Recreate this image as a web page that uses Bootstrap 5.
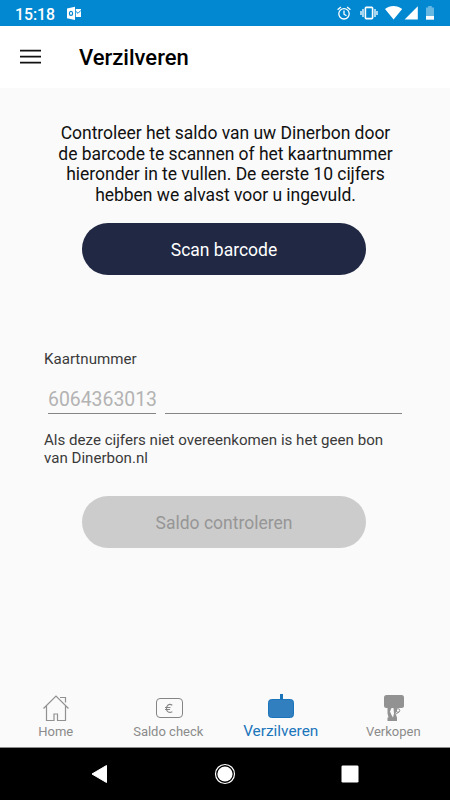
<!DOCTYPE html>
<html lang="nl">
<head>
<meta charset="utf-8">
<meta name="viewport" content="width=device-width, initial-scale=1">
<title>Verzilveren</title>
<link href="https://cdn.jsdelivr.net/npm/bootstrap@5.3.0/dist/css/bootstrap.min.css" rel="stylesheet">
<style>
  body { font-family: Roboto, "Liberation Sans", sans-serif; background: #fafafa; color: #111; }
  svg { display: block; flex: none; }
  .status-bar { height: 26px; background: #0288d1; padding: 2px 0 0 15px; font-size: 15.8px; line-height: 24px; }
  .clock { font-weight: 500; padding-top: 1px; }
  .app-bar { height: 62px; padding: 0 20px; gap: 38px; }
  .app-title { font-size: 22px; line-height: 25px; font-weight: 500; color: #000; padding-top: 1px; }
  .content { padding: 35px 46px 0 44px; }
  .intro { font-size: 17.5px; line-height: 20.5px; letter-spacing: -.03px; padding-left: 3px; }
  .pill { width: 284px; height: 52px; font-size: 17.5px; --bs-btn-padding-y: 0; --bs-btn-border-width: 0; padding-top: 2px; }
  .pill-scan { --bs-btn-bg: #202843; --bs-btn-color: #fff; --bs-btn-hover-bg: #2b3558; --bs-btn-hover-color: #fff; margin-top: 18px; }
  .pill-check { --bs-btn-disabled-bg: #ccc; --bs-btn-disabled-color: #969696; --bs-btn-disabled-opacity: 1; margin-top: 29px; }
  .field-label { font-size: 15.1px; line-height: 18px; margin-top: 75px; color: #3a3a3a; }
  .fields { margin: 18px 2px 0 4px; gap: 9px; }
  .line-input, .line-input:disabled { min-width: 0; height: 28px; background: transparent; border-bottom: 1px solid #858585; font-size: 19.4px; color: #b3b3b3; }
  .line-input.prefix { width: 108px; flex: none; }
  .hint { font-size: 15.1px; line-height: 18px; margin-top: 17px; color: #3a3a3a; }
  .tabs { height: 58px; color: #8b8b8b; font-size: 13px; line-height: 16px; }
  .tab { flex: 1 1 0; gap: 2px; color: inherit; }
  .tab span { margin-left: -1px; }
  .tab.current { color: #1b75bb; font-size: 15.4px; gap: 1px; }
  .system-bar { height: 53px; background: #000; padding: 0 91px; border-top: 1px solid #8c8c8c; }
</style>
<script src="https://cdn.jsdelivr.net/npm/bootstrap@5.3.0/dist/js/bootstrap.bundle.min.js"></script>
</head>
<body class="vh-100 overflow-hidden d-flex flex-column">
  <div class="status-bar d-flex align-items-center text-white flex-shrink-0">
    <span class="clock">15:18</span>
    <svg class="ms-auto" width="384" height="24" viewBox="66 2 384 24">
      <path fill="#fff" d="M67 8.500l8-1.700v13.200l-8-1.700z"/>
      <path fill="#fff" d="M75.800 9h5.200v8h-5.200z"/>
      <ellipse cx="71" cy="13.400" rx="1.600" ry="2" fill="none" stroke="#0288d1" stroke-width="1.200"/>
      <path d="M76 11.500l2 1.800 3-3" fill="none" stroke="#0288d1"/>
      <g fill="none" stroke="#fff" stroke-width="1.300">
        <circle cx="344" cy="13.800" r="5.200"/>
        <path d="M344 10.500v3.700l2.500 1.500M337.600 9.700l3.300-2.800M350.400 9.700l-3.300-2.800"/>
        <rect x="365.400" y="7.400" width="7.200" height="11.200" rx=".8" stroke-width="1.600"/>
        <path d="M363 9v8M375 9v8M361 11v4M377 11v4" stroke-width="1.300"/>
      </g>
      <path fill="#fff" d="M385 9c5-4 12-4 17.200 0L393.600 19.500zM417.800 6.300V19.500H404.600z"/>
      <path fill="#fff" fill-opacity=".4" d="M426 7.500h2.200V6h3.600v1.500h2.200V16h-8z"/>
      <path fill="#fff" d="M426 16h8v3.700h-8z"/>
    </svg>
  </div>
  <header class="app-bar bg-white d-flex align-items-center flex-shrink-0">
    <svg width="21" height="16" viewBox="0 0 21 16"><path d="M0 1.700h21M0 7.700h21M0 13.700h21" stroke="#111" stroke-width="1.800"/></svg>
    <h1 class="app-title mb-0">Verzilveren</h1>
  </header>
  <main class="content flex-grow-1 d-flex flex-column">
    <p class="intro text-center text-nowrap mb-0">Controleer het saldo van uw Dinerbon door<br>de barcode te scannen of het kaartnummer<br>hieronder in te vullen. De eerste 10 cijfers<br>hebben we alvast voor u ingevuld.</p>
    <button class="pill pill-scan btn rounded-pill align-self-center" type="button">Scan barcode</button>
    <label class="field-label" for="card">Kaartnummer</label>
    <div class="fields d-flex">
      <input class="line-input prefix border-top-0 border-start-0 border-end-0 p-0" value="6064363013" disabled>
      <input class="line-input flex-grow-1 border-top-0 border-start-0 border-end-0 p-0" id="card">
    </div>
    <p class="hint text-nowrap mb-0">Als deze cijfers niet overeenkomen is het geen bon<br>van Dinerbon.nl</p>
    <button class="pill pill-check btn rounded-pill align-self-center" type="button" disabled>Saldo controleren</button>
  </main>
  <nav class="tabs d-flex flex-shrink-0">
    <a class="tab d-flex flex-column align-items-center text-decoration-none" href="#">
      <svg width="28" height="33" viewBox="42 689 28 33" fill="none" stroke="#919191" stroke-width="1.200"><path d="M43.500 708.500L56 696l12.500 12.500M46.500 706v14.500H54V714h3.500v6.500h8V706M60 697.500h5.500v5"/></svg>
      <span>Home</span>
    </a>
    <a class="tab d-flex flex-column align-items-center text-decoration-none" href="#">
      <svg width="28" height="33" viewBox="154 689 28 33" fill="none" stroke="#858585"><rect x="155.500" y="698.500" width="26" height="19" rx="3.500"/><path d="M171.300 705.200c-3.500-2-5.800.3-5.800 3.300s2.300 5 5.800 3.200M164 707.500h5.500M164 709.500h5" stroke-width="1.100"/></svg>
      <span>Saldo check</span>
    </a>
    <a class="tab current d-flex flex-column align-items-center text-decoration-none" href="#" aria-current="page">
      <svg width="28" height="33" viewBox="267 689 28 33"><path d="M281.500 694v6" stroke="#1b75bb" stroke-width="3"/><rect x="268.500" y="699.500" width="25" height="18" rx="3" fill="#327fbf" stroke="#1b75bb"/></svg>
      <span>Verzilveren</span>
    </a>
    <a class="tab d-flex flex-column align-items-center text-decoration-none" href="#">
      <svg width="28" height="33" viewBox="379.500 689 28 33"><rect x="383.500" y="695" width="20" height="13" rx="2.500" fill="#929292"/><path d="M387 708h4l-1.500 3.500 1.500 3.500 1.500 2.500h-4.500l-1-4zM393 708h3.500v2.500l-1.500 3 1.500 4H392.500l1-4zM387 717.500h9.500v3.500H387z" fill="#929292"/><circle cx="397.500" cy="710.500" r="1.800" fill="none" stroke="#929292"/><path d="M395.500 714l3-2" stroke="#929292"/></svg>
      <span>Verkopen</span>
    </a>
  </nav>
  <footer class="system-bar d-flex align-items-center justify-content-between flex-shrink-0">
    <svg width="17" height="20" viewBox="0 0 17 20"><path d="M1 10L15.500 1.500v17z" fill="#fff" stroke="#fff" stroke-linejoin="round"/></svg>
    <svg width="22" height="22" viewBox="0 0 22 22"><circle cx="11" cy="11" r="7.600" fill="#fff"/><circle cx="11" cy="11" r="9.500" fill="none" stroke="#fff" stroke-width="1.200"/></svg>
    <svg width="18" height="18" viewBox="0 0 18 18"><rect x=".5" y=".5" width="17" height="17" rx="1.300" fill="#fff"/></svg>
  </footer>
</body>
</html>
